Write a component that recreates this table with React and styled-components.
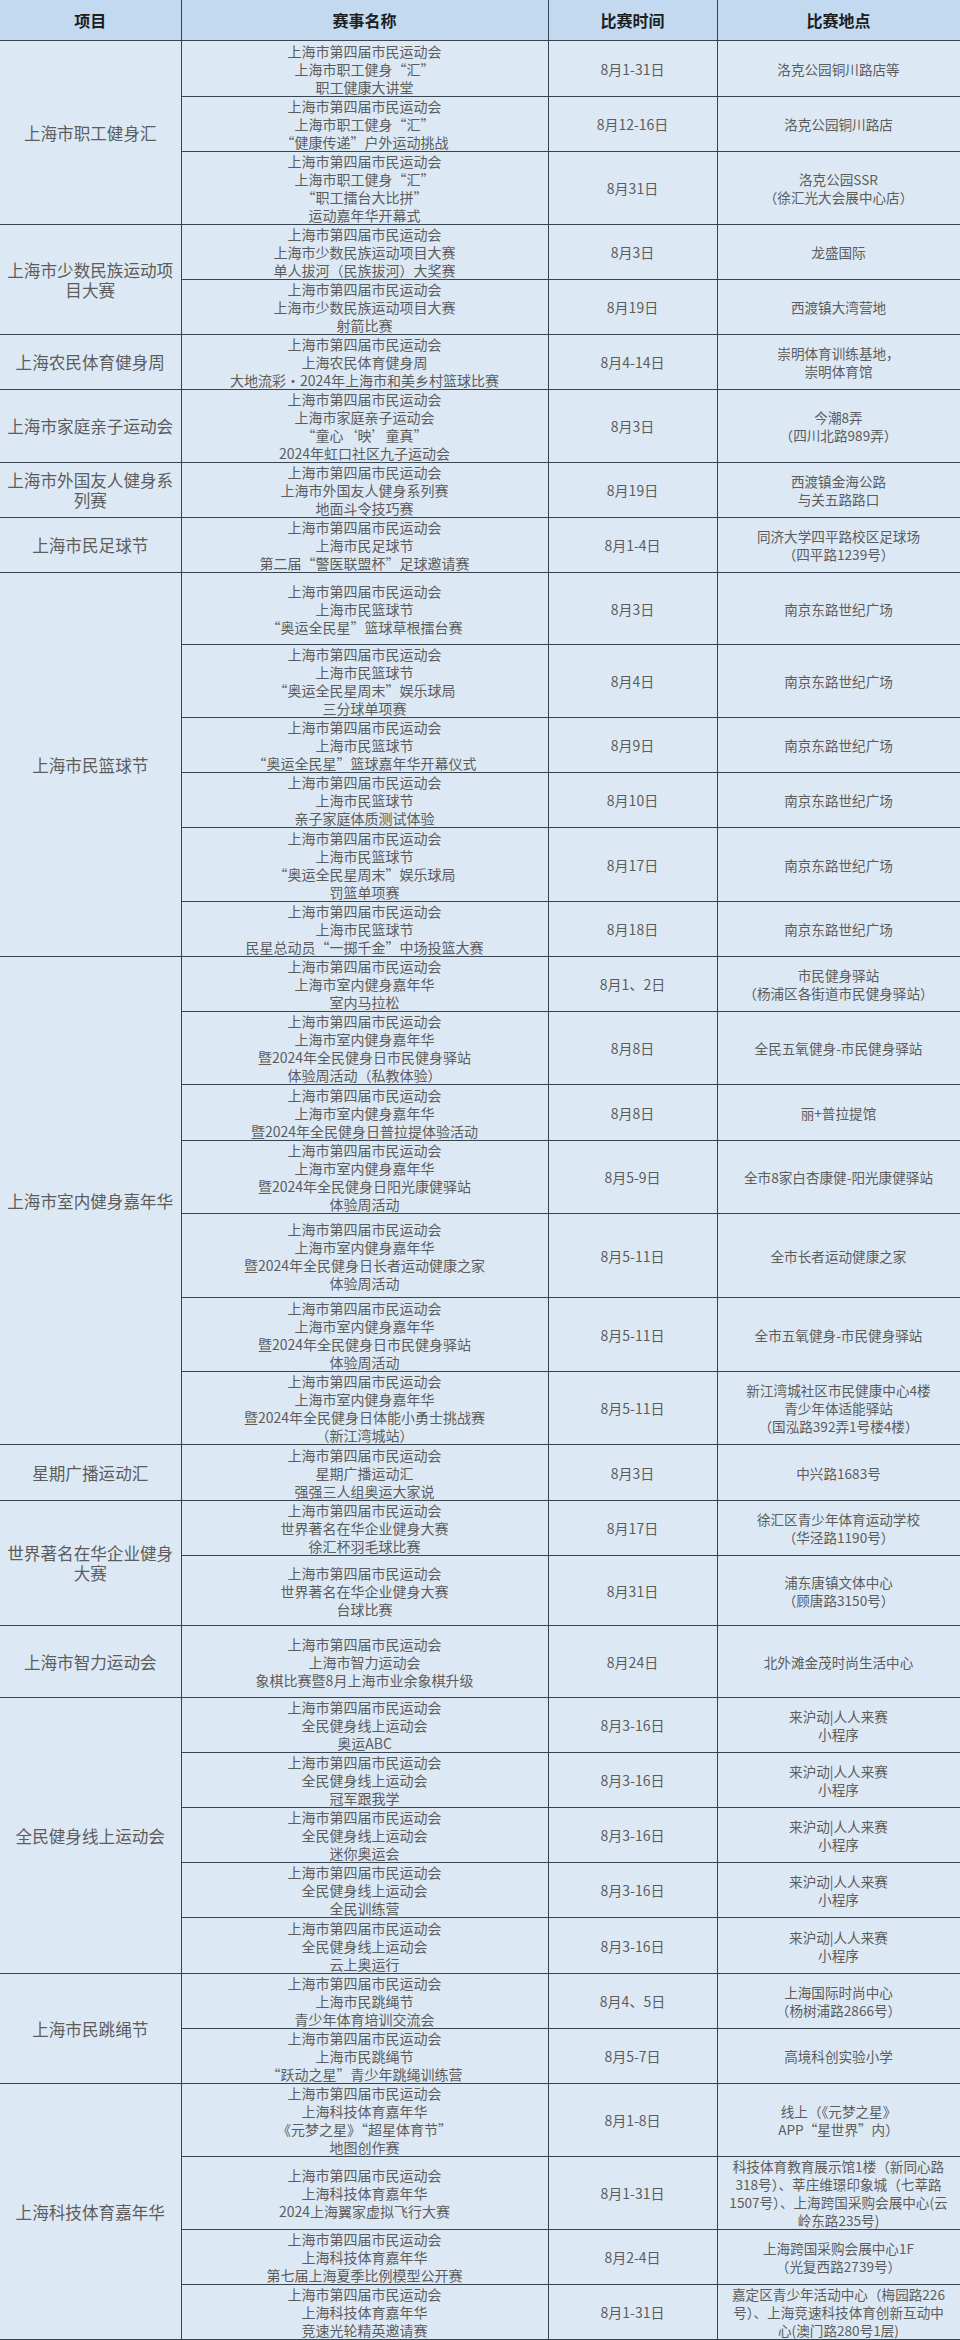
import styled, { createGlobalStyle } from "styled-components";

const GlobalStyle = createGlobalStyle`
	html, body {
		margin: 0;
		padding: 0;
		background: #ffffff;
	}
	body {
		font-family: "Noto Sans CJK SC", "Noto Sans", sans-serif;
	}
`;

const FIRST = "上海市第四届市民运动会";

const groups = [
	{
		name: "上海市职工健身汇",
		rows: [
			{ h: 56, lines: [FIRST, "上海市职工健身“汇”", "职工健康大讲堂"], date: "8月1-31日", place: ["洛克公园铜川路店等"] },
			{ h: 55, lines: [FIRST, "上海市职工健身“汇”", "“健康传递”户外运动挑战"], date: "8月12-16日", place: ["洛克公园铜川路店"] },
			{ h: 73, lines: [FIRST, "上海市职工健身“汇”", "“职工擂台大比拼”", "运动嘉年华开幕式"], date: "8月31日", place: ["洛克公园SSR", "（徐汇光大会展中心店）"] },
		],
	},
	{
		name: "上海市少数民族运动项目大赛",
		rows: [
			{ h: 55, lines: [FIRST, "上海市少数民族运动项目大赛", "单人拔河（民族拔河）大奖赛"], date: "8月3日", place: ["龙盛国际"] },
			{ h: 55, lines: [FIRST, "上海市少数民族运动项目大赛", "射箭比赛"], date: "8月19日", place: ["西渡镇大湾营地"] },
		],
	},
	{
		name: "上海农民体育健身周",
		rows: [
			{ h: 55, lines: [FIRST, "上海农民体育健身周", "大地流彩·2024年上海市和美乡村篮球比赛"], date: "8月4-14日", place: ["崇明体育训练基地，", "崇明体育馆"] },
		],
	},
	{
		name: "上海市家庭亲子运动会",
		rows: [
			{ h: 73, lines: [FIRST, "上海市家庭亲子运动会", "“童心‘映’童真”", "2024年虹口社区九子运动会"], date: "8月3日", place: ["今潮8弄", "（四川北路989弄）"] },
		],
	},
	{
		name: "上海市外国友人健身系列赛",
		rows: [
			{ h: 55, lines: [FIRST, "上海市外国友人健身系列赛", "地面斗令技巧赛"], date: "8月19日", place: ["西渡镇金海公路", "与关五路路口"] },
		],
	},
	{
		name: "上海市民足球节",
		rows: [
			{ h: 55, lines: [FIRST, "上海市民足球节", "第二届“警医联盟杯”足球邀请赛"], date: "8月1-4日", place: ["同济大学四平路校区足球场", "（四平路1239号）"] },
		],
	},
	{
		name: "上海市民篮球节",
		rows: [
			{ h: 72, lines: [FIRST, "上海市民篮球节", "“奥运全民星”篮球草根擂台赛"], date: "8月3日", place: ["南京东路世纪广场"] },
			{ h: 73, lines: [FIRST, "上海市民篮球节", "“奥运全民星周末”娱乐球局", "三分球单项赛"], date: "8月4日", place: ["南京东路世纪广场"] },
			{ h: 55, lines: [FIRST, "上海市民篮球节", "“奥运全民星”篮球嘉年华开幕仪式"], date: "8月9日", place: ["南京东路世纪广场"] },
			{ h: 55, lines: [FIRST, "上海市民篮球节", "亲子家庭体质测试体验"], date: "8月10日", place: ["南京东路世纪广场"] },
			{ h: 74, lines: [FIRST, "上海市民篮球节", "“奥运全民星周末”娱乐球局", "罚篮单项赛"], date: "8月17日", place: ["南京东路世纪广场"] },
			{ h: 55, lines: [FIRST, "上海市民篮球节", "民星总动员“一掷千金”中场投篮大赛"], date: "8月18日", place: ["南京东路世纪广场"] },
		],
	},
	{
		name: "上海市室内健身嘉年华",
		rows: [
			{ h: 55, lines: [FIRST, "上海市室内健身嘉年华", "室内马拉松"], date: "8月1、2日", place: ["市民健身驿站", "（杨浦区各街道市民健身驿站）"] },
			{ h: 73, lines: [FIRST, "上海市室内健身嘉年华", "暨2024年全民健身日市民健身驿站", "体验周活动（私教体验）"], date: "8月8日", place: ["全民五氧健身-市民健身驿站"] },
			{ h: 56, lines: [FIRST, "上海市室内健身嘉年华", "暨2024年全民健身日普拉提体验活动"], date: "8月8日", place: ["丽+普拉提馆"] },
			{ h: 72, lines: [FIRST, "上海市室内健身嘉年华", "暨2024年全民健身日阳光康健驿站", "体验周活动"], date: "8月5-9日", place: ["全市8家白杏康健-阳光康健驿站"] },
			{ h: 84, lines: [FIRST, "上海市室内健身嘉年华", "暨2024年全民健身日长者运动健康之家", "体验周活动"], date: "8月5-11日", place: ["全市长者运动健康之家"] },
			{ h: 74, lines: [FIRST, "上海市室内健身嘉年华", "暨2024年全民健身日市民健身驿站", "体验周活动"], date: "8月5-11日", place: ["全市五氧健身-市民健身驿站"] },
			{ h: 73, lines: [FIRST, "上海市室内健身嘉年华", "暨2024年全民健身日体能小勇士挑战赛", "（新江湾城站）"], date: "8月5-11日", place: ["新江湾城社区市民健康中心4楼", "青少年体适能驿站", "（国泓路392弄1号楼4楼）"] },
		],
	},
	{
		name: "星期广播运动汇",
		rows: [
			{ h: 56, lines: [FIRST, "星期广播运动汇", "强强三人组奥运大家说"], date: "8月3日", place: ["中兴路1683号"] },
		],
	},
	{
		name: "世界著名在华企业健身大赛",
		rows: [
			{ h: 54, lines: [FIRST, "世界著名在华企业健身大赛", "徐汇杯羽毛球比赛"], date: "8月17日", place: ["徐汇区青少年体育运动学校", "（华泾路1190号）"] },
			{ h: 70, lines: [FIRST, "世界著名在华企业健身大赛", "台球比赛"], date: "8月31日", place: ["浦东唐镇文体中心", "（顾唐路3150号）"] },
		],
	},
	{
		name: "上海市智力运动会",
		rows: [
			{ h: 72, lines: [FIRST, "上海市智力运动会", "象棋比赛暨8月上海市业余象棋升级"], date: "8月24日", place: ["北外滩金茂时尚生活中心"] },
		],
	},
	{
		name: "全民健身线上运动会",
		rows: [
			{ h: 55, lines: [FIRST, "全民健身线上运动会", "奥运ABC"], date: "8月3-16日", place: ["来沪动|人人来赛", "小程序"] },
			{ h: 55, lines: [FIRST, "全民健身线上运动会", "冠军跟我学"], date: "8月3-16日", place: ["来沪动|人人来赛", "小程序"] },
			{ h: 55, lines: [FIRST, "全民健身线上运动会", "迷你奥运会"], date: "8月3-16日", place: ["来沪动|人人来赛", "小程序"] },
			{ h: 55, lines: [FIRST, "全民健身线上运动会", "全民训练营"], date: "8月3-16日", place: ["来沪动|人人来赛", "小程序"] },
			{ h: 56, lines: [FIRST, "全民健身线上运动会", "云上奥运行"], date: "8月3-16日", place: ["来沪动|人人来赛", "小程序"] },
		],
	},
	{
		name: "上海市民跳绳节",
		rows: [
			{ h: 55, lines: [FIRST, "上海市民跳绳节", "青少年体育培训交流会"], date: "8月4、5日", place: ["上海国际时尚中心", "（杨树浦路2866号）"] },
			{ h: 55, lines: [FIRST, "上海市民跳绳节", "“跃动之星”青少年跳绳训练营"], date: "8月5-7日", place: ["高境科创实验小学"] },
		],
	},
	{
		name: "上海科技体育嘉年华",
		rows: [
			{ h: 73, lines: [FIRST, "上海科技体育嘉年华", "《元梦之星》“超星体育节”", "地图创作赛"], date: "8月1-8日", place: ["线上（《元梦之星》", "APP“星世界”内）"] },
			{ h: 73, lines: [FIRST, "上海科技体育嘉年华", "2024上海翼家虚拟飞行大赛"], date: "8月1-31日", place: ["科技体育教育展示馆1楼（新同心路", "318号）、莘庄维璟印象城（七莘路", "1507号）、上海跨国采购会展中心(云", "岭东路235号)"] },
			{ h: 55, lines: [FIRST, "上海科技体育嘉年华", "第七届上海夏季比例模型公开赛"], date: "8月2-4日", place: ["上海跨国采购会展中心1F", "（光复西路2739号）"] },
			{ h: 55, lines: [FIRST, "上海科技体育嘉年华", "竞速光轮精英邀请赛"], date: "8月1-31日", place: ["嘉定区青少年活动中心（梅园路226", "号）、上海竞速科技体育创新互动中", "心(澳门路280号1层)"] },
		],
	},
];

function Lines({ items }) {
	return items.map((t, i) => <Line key={i}>{t}</Line>);
}

export default function App() {
	return (
		<>
			<GlobalStyle />
			<Table>
				<colgroup>
					<col style={{ width: 181 }} />
					<col style={{ width: 367 }} />
					<col style={{ width: 169 }} />
					<col style={{ width: 243 }} />
				</colgroup>
				<thead>
					<tr>
						<Head>项目</Head>
						<Head>赛事名称</Head>
						<Head>比赛时间</Head>
						<Head>比赛地点</Head>
					</tr>
				</thead>
				<tbody>
					{groups.map((g) =>
						g.rows.map((r, i) => (
							<Row key={g.name + i} $h={r.h}>
								{i === 0 && <Project rowSpan={g.rows.length}>{g.name}</Project>}
								<Cell>
									<Lines items={r.lines} />
								</Cell>
								<Cell>{r.date}</Cell>
								<Place>
									<Lines items={r.place} />
								</Place>
							</Row>
						))
					)}
				</tbody>
			</Table>
		</>
	);
}

const Table = styled.table`
	width: 960px;
	table-layout: fixed;
	border-collapse: collapse;
	background: #dce9f5;
	color: #5c5c5c;
`;

const Head = styled.th`
	height: 40px;
	padding: 0;
	background: #c2d9ef;
	border: 1px solid #38444f;
	border-top: none;
	font-size: 16px;
	font-weight: 700;
	color: #1e1e1e;
	text-align: center;
	vertical-align: middle;
	&:first-child {
		border-left: none;
	}
`;

const Row = styled.tr`
	height: ${(p) => p.$h}px;
`;

const Cell = styled.td`
	padding: 0 4px;
	border: 1px solid #38444f;
	font-size: 14px;
	line-height: 18px;
	text-align: center;
	vertical-align: middle;
	overflow: hidden;
`;

const Project = styled(Cell)`
	padding: 0 2px;
	font-size: 16.6px;
	line-height: 20px;
	border-left: none;
	word-break: break-all;
`;

const Place = styled(Cell)`
	padding: 0 2px;
	font-size: 13.6px;
`;

const Line = styled.div`
	white-space: nowrap;
`;
